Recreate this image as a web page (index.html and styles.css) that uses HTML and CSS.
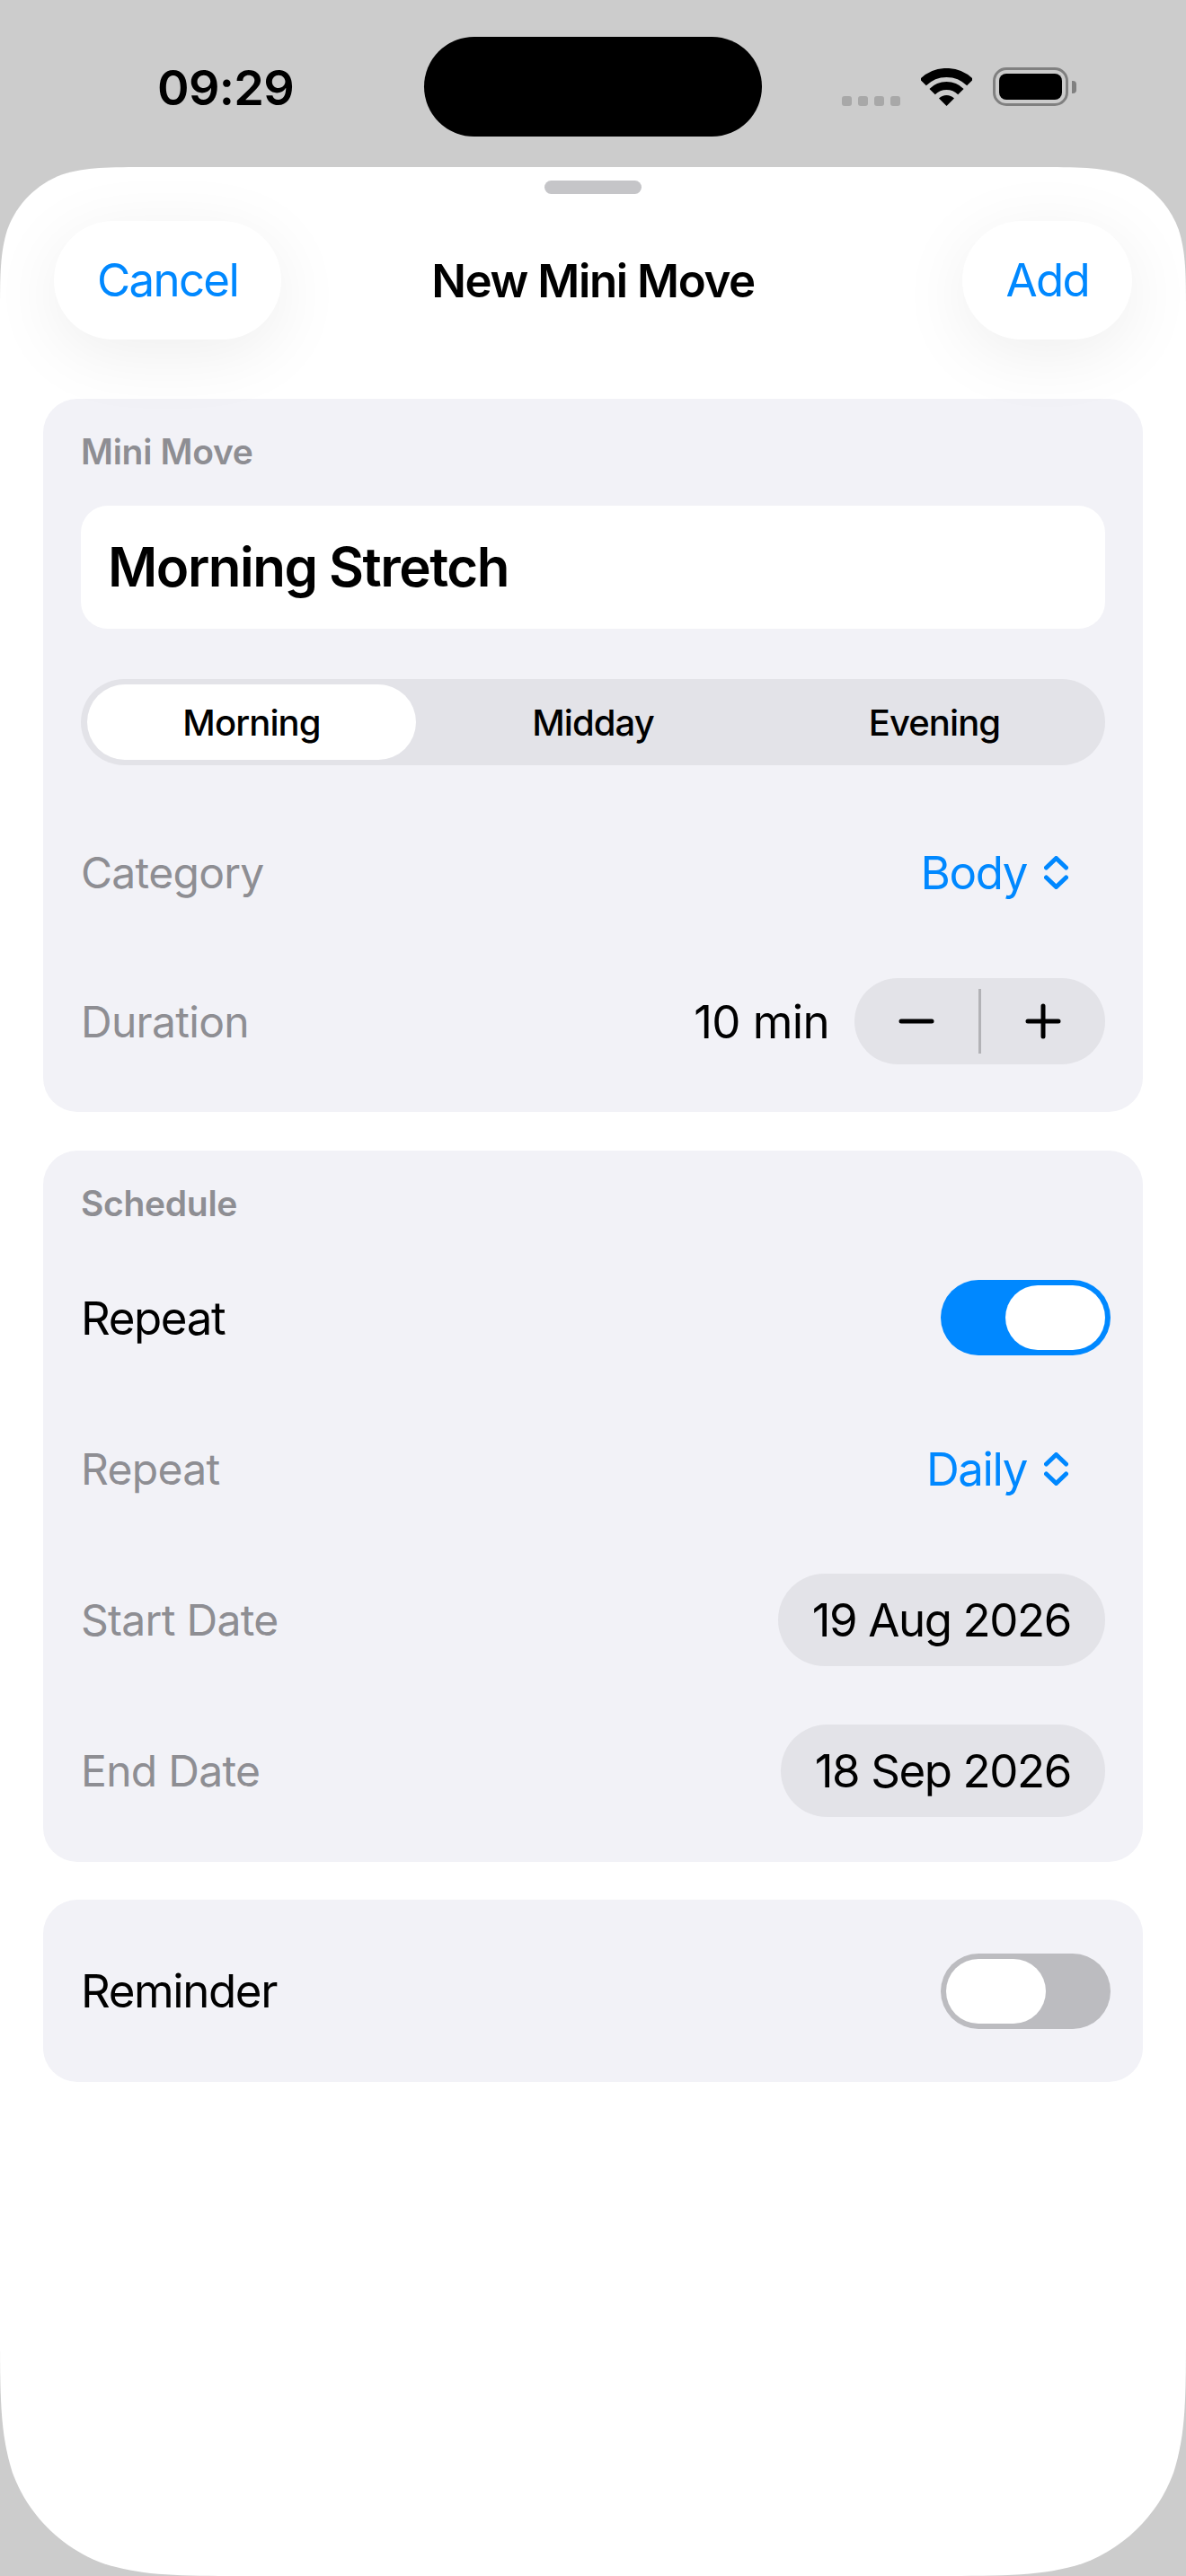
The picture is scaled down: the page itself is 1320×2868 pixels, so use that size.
FILE: index.html
```html
<!DOCTYPE html>
<html lang="en">
<head>
    <meta charset="UTF-8">
    <meta name="viewport" content="width=device-width, initial-scale=1.0">
    <title>New Mini Move</title>
    <link rel="stylesheet" href="styles.css">
</head>
<body>
    <div class="status-bar">
        <span class="time">09:29</span>
        <div class="island"></div>
        <div class="status-icons">
            <div class="signal"><i></i><i></i><i></i><i></i></div>
            <svg class="wifi" width="57" height="42" viewBox="0 0 57 42">
                <path d="M2.3 15.8A37 37 0 0 1 54.7 15.8" fill="none" stroke="#000" stroke-width="10"/>
                <path d="M12.6 26.1A22.5 22.5 0 0 1 44.4 26.1" fill="none" stroke="#000" stroke-width="9"/>
                <path d="M28.5 42L20 33.5A12 12 0 0 1 37 33.5Z" fill="#000"/>
            </svg>
            <div class="battery">
                <div class="battery-body"><div class="battery-level"></div></div>
                <div class="battery-nub"></div>
            </div>
        </div>
    </div>

    <div class="sheet">
        <div class="handle"></div>

        <div class="nav">
            <div class="nav-btn nav-left">Cancel</div>
            <div class="nav-title">New Mini Move</div>
            <div class="nav-btn nav-right">Add</div>
        </div>

        <div class="cards">
            <div class="card card-move">
                <div class="card-label">Mini Move</div>
                <div class="name-field">Morning Stretch</div>
                <div class="segments">
                    <div class="segment selected"><span>Morning</span></div>
                    <div class="segment"><span>Midday</span></div>
                    <div class="segment"><span>Evening</span></div>
                </div>
                <div class="row">
                    <span class="row-label">Category</span>
                    <div class="picker">
                        <span>Body</span>
                        <svg width="27" height="37" viewBox="0 0 27 37"><path d="M2.5 13L13.5 2.5L24.5 13M2.5 24L13.5 34.5L24.5 24" fill="none" stroke="#0088ff" stroke-width="5" stroke-linecap="round" stroke-linejoin="round"/></svg>
                    </div>
                </div>
                <div class="row">
                    <span class="row-label">Duration</span>
                    <div class="duration">
                        <span>10 min</span>
                        <div class="stepper">
                            <div class="step">
                                <svg width="40" height="40" viewBox="0 0 40 40"><path d="M3 20H37" stroke="#000" stroke-width="5" stroke-linecap="round"/></svg>
                            </div>
                            <div class="step-line"></div>
                            <div class="step">
                                <svg width="40" height="40" viewBox="0 0 40 40"><path d="M3 20H37M20 3V37" stroke="#000" stroke-width="5" stroke-linecap="round"/></svg>
                            </div>
                        </div>
                    </div>
                </div>
            </div>

            <div class="card card-schedule">
                <div class="card-label">Schedule</div>
                <div class="row">
                    <span>Repeat</span>
                    <div class="toggle on"><div class="thumb"></div></div>
                </div>
                <div class="row">
                    <span class="row-label">Repeat</span>
                    <div class="picker">
                        <span>Daily</span>
                        <svg width="27" height="37" viewBox="0 0 27 37"><path d="M2.5 13L13.5 2.5L24.5 13M2.5 24L13.5 34.5L24.5 24" fill="none" stroke="#0088ff" stroke-width="5" stroke-linecap="round" stroke-linejoin="round"/></svg>
                    </div>
                </div>
                <div class="row">
                    <span class="row-label">Start Date</span>
                    <div class="date-pill">19 Aug 2026</div>
                </div>
                <div class="row">
                    <span class="row-label">End Date</span>
                    <div class="date-pill">18 Sep 2026</div>
                </div>
            </div>

            <div class="card card-reminder">
                <div class="row">
                    <span>Reminder</span>
                    <div class="toggle"><div class="thumb"></div></div>
                </div>
            </div>
        </div>
    </div>
</body>
</html>
```

FILE: styles.css
```css
* {
    box-sizing: border-box;
}
body {
    margin: 0;
    height: 2868px;
    overflow: hidden;
    background: #cccccc;
    font-family: Inter, "Noto Sans", sans-serif;
    font-size: 51px;
    letter-spacing: -1.4px;
    color: #000;
}

/* status bar */
.status-bar {
    height: 186px;
    display: flex;
    align-items: flex-start;
    padding: 41px 0 0 175px;
}
.time {
    width: 297px;
    margin-top: 26px;
    font-size: 54px;
    line-height: 62px;
    font-weight: 600;
    letter-spacing: -0.7px;
}
.island {
    width: 376px;
    height: 111px;
    background: #000;
    border-radius: 56px;
}
.status-icons {
    display: flex;
    align-items: flex-end;
    height: 77px;
    margin-left: 89px;
}
.signal {
    display: flex;
    gap: 7px;
    margin-right: 23px;
}
.signal i {
    width: 11px;
    height: 11px;
    background: #a8a8a8;
    border-radius: 3px;
}
.wifi {
    display: block;
    margin-right: 23px;
}
.battery {
    display: flex;
    align-items: center;
    gap: 4px;
}
.battery-body {
    width: 84px;
    height: 43px;
    padding: 4px;
    border: 3px solid #808080;
    border-radius: 15px;
}
.battery-level {
    height: 100%;
    background: #000;
    border-radius: 8px;
}
.battery-nub {
    width: 5px;
    height: 14px;
    background: #808080;
    border-radius: 0 4px 4px 0;
}

/* sheet */
.sheet {
    height: 2682px;
    background: #fff;
    clip-path: path("M168.15 0L1151.85 0C1200.27 0 1224.48 0 1250.54 8.24C1279 18.6 1301.4 41 1311.76 69.46C1320 95.52 1320 119.73 1320 168.15L1320 2402.25C1320 2483.08 1320 2523.08 1306.29 2566.44C1289.06 2613.77 1251.77 2651.06 1204.44 2668.29C1161.08 2682 1121.08 2682 1040.25 2682L279.75 2682C198.92 2682 158.92 2682 115.56 2668.29C68.23 2651.06 30.94 2613.77 13.71 2566.44C0 2523.08 0 2483.08 0 2402.25L0 168.15C0 119.73 0 95.52 8.24 69.46C18.6 41 41 18.6 69.46 8.24C95.52 0 119.73 0 168.15 0Z");
}
.handle {
    width: 108px;
    height: 15px;
    margin: 0 auto;
    position: relative;
    top: 15px;
    background: #c5c5c8;
    border-radius: 8px;
}
.nav {
    display: grid;
    grid-template-columns: 1fr auto 1fr;
    align-items: center;
    height: 132px;
    margin-top: 45px;
    padding: 0 60px;
}
.nav-title {
    font-weight: 600;
}
.nav-btn {
    height: 132px;
    line-height: 132px;
    padding: 0 48px;
    background: #fff;
    border-radius: 66px;
    color: #0088ff;
    letter-spacing: -1.7px;
    box-shadow: 0 16px 80px rgba(0, 0, 0, 0.07);
}
.nav-left {
    justify-self: start;
}
.nav-right {
    justify-self: end;
}

/* cards */
.cards {
    padding: 66px 48px 0;
}
.card {
    padding: 0 42px;
    background: #f2f2f7;
    border-radius: 38px;
}
.card-move {
    height: 794px;
    padding-top: 44px;
}
.card-schedule {
    height: 792px;
    margin-top: 43px;
    padding-top: 44px;
}
.card-reminder {
    height: 203px;
    margin-top: 42px;
}
.card-label {
    font-size: 39px;
    line-height: 30px;
    font-weight: 600;
    letter-spacing: -0.3px;
    color: #8e8e93;
}
.name-field {
    height: 137px;
    line-height: 137px;
    margin-top: 45px;
    padding: 0 30px;
    background: #fff;
    border-radius: 30px;
    font-size: 60px;
    font-weight: 600;
    letter-spacing: -1.5px;
}
.segments {
    display: grid;
    grid-template-columns: repeat(3, 1fr);
    height: 96px;
    margin: 56px 0 36px;
    background: #e3e3e8;
    border-radius: 48px;
}
.segment {
    display: flex;
    align-items: center;
    justify-content: center;
    margin: 6px 7px;
    border-radius: 42px;
    font-size: 40px;
    font-weight: 450;
    letter-spacing: -0.9px;
}
.selected {
    background: #fff;
}
.row {
    display: flex;
    align-items: center;
    justify-content: space-between;
    height: 166px;
}
.card-schedule .card-label {
    margin-bottom: 28px;
}
.card-schedule .row {
    height: 168px;
}
.card-reminder .row {
    height: 203px;
}
.row-label {
    font-size: 48px;
    letter-spacing: -0.7px;
    color: #8e8e93;
}
.picker {
    display: flex;
    align-items: center;
    gap: 19px;
    padding-right: 41px;
    color: #0088ff;
}
.picker svg {
    display: block;
}
.duration {
    display: flex;
    align-items: center;
    gap: 28px;
    letter-spacing: -0.6px;
}
.stepper {
    display: flex;
    align-items: center;
    width: 279px;
    height: 96px;
    background: #e3e3e8;
    border-radius: 48px;
}
.step {
    flex: 1;
    display: flex;
    justify-content: center;
}
.step svg {
    display: block;
}
.step-line {
    width: 3px;
    height: 72px;
    background: #b2b2b6;
}
.date-pill {
    height: 103px;
    line-height: 103px;
    padding: 0 38px;
    background: #e3e3e8;
    border-radius: 52px;
}
.toggle {
    display: flex;
    width: 189px;
    height: 84px;
    margin-right: -6px;
    padding: 6px;
    background: #bcbcc0;
    border-radius: 42px;
}
.toggle.on {
    justify-content: flex-end;
    background: #0088ff;
}
.thumb {
    width: 111px;
    height: 72px;
    background: #fff;
    border-radius: 36px;
}
```
